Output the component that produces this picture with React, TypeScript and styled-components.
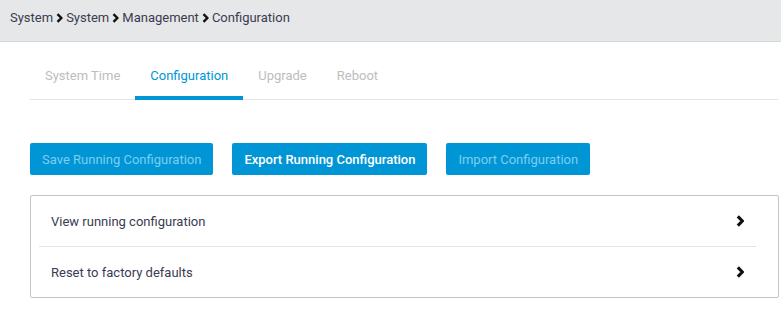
import React from "react";
import styled, { createGlobalStyle } from "styled-components";

const GlobalStyle = createGlobalStyle`
  body {
    margin: 0;
    background: #ffffff;
    font-family: Roboto, "Liberation Sans", sans-serif;
  }
`;

const Header = styled.header`
  height: 42px;
  box-sizing: border-box;
  background: #e6e7e8;
  border-bottom: 1px solid #d6d7d8;
  display: flex;
  align-items: center;
  padding: 0 0 6px 10px;
  gap: 3px;
  font-size: 13px;
  color: #3b3b52;
`;

const Crumb = styled.span`
  display: flex;
  align-items: center;
  gap: 3px;
`;

const Content = styled.main`
  padding: 12px 3px 0 30px;
`;

const Tabs = styled.nav`
  display: flex;
  border-bottom: 1px solid #e4e4e4;
  height: 45px;
`;

const Tab = styled.div<{ $active?: boolean }>`
  display: flex;
  align-items: center;
  padding: 0 15px 4px;
  font-size: 13px;
  color: ${(p) => (p.$active ? "#0096d6" : "#bdbdbd")};
  box-shadow: ${(p) => (p.$active ? "inset 0 -4px 0 #0096d6" : "none")};
  margin-bottom: -1px;
  box-sizing: border-box;
`;

const Actions = styled.div`
  display: flex;
  gap: 19px;
  margin-top: 43px;
`;

const Button = styled.button<{ $disabled?: boolean }>`
  height: 32px;
  padding: 0 12px;
  border: none;
  border-radius: 2px;
  background: #0096d6;
  font-family: inherit;
  font-size: 13px;
  font-weight: ${(p) => (p.$disabled ? 400 : 500)};
  color: ${(p) => (p.$disabled ? "#7fcdee" : "#ffffff")};
`;

const Card = styled.section`
  margin-top: 20px;
  border: 1px solid #c4c4c4;
  border-radius: 2px;
  padding: 0 8px;
  width: 731px;
`;

const Row = styled.div<{ $last?: boolean }>`
  height: 50px;
  display: flex;
  align-items: center;
  justify-content: space-between;
  padding: 0 12px 0 12px;
  margin-right: 14px;
  border-bottom: ${(p) => (p.$last ? "none" : "1px solid #e4e4e4")};
  font-size: 13px;
  color: #3b3b52;
`;

const Chevron = ({ size = 12, stroke = 2.6 }: { size?: number; stroke?: number }) => (
  <svg width={size * 0.7} height={size} viewBox="0 0 7 10">
    <polyline
      points="1.5,1.2 5.3,5 1.5,8.8"
      fill="none"
      stroke="#111"
      strokeWidth={stroke}
    />
  </svg>
);

const crumbs = ["System", "System", "Management", "Configuration"];
const tabs = ["System Time", "Configuration", "Upgrade", "Reboot"];

export default function App() {
  return (
    <>
      <GlobalStyle />
      <Header>
        {crumbs.map((c, i) => (
          <Crumb key={i}>
            {c}
            {i < crumbs.length - 1 && <Chevron size={10} stroke={2.4} />}
          </Crumb>
        ))}
      </Header>
      <Content>
        <Tabs>
          {tabs.map((t) => (
            <Tab key={t} $active={t === "Configuration"}>
              {t}
            </Tab>
          ))}
        </Tabs>
        <Actions>
          <Button $disabled>Save Running Configuration</Button>
          <Button>Export Running Configuration</Button>
          <Button $disabled>Import Configuration</Button>
        </Actions>
        <Card>
          <Row>
            View running configuration
            <Chevron />
          </Row>
          <Row $last>
            Reset to factory defaults
            <Chevron />
          </Row>
        </Card>
      </Content>
    </>
  );
}
